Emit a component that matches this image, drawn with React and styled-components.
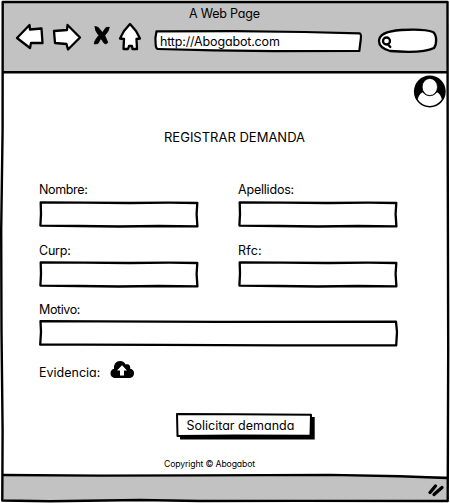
import React from 'react';
import styled, { createGlobalStyle } from 'styled-components';

const GlobalStyle = createGlobalStyle`
  * { box-sizing: border-box; }
  body { margin: 0; background: #fff; }
`;

const Browser = styled.div`
  position: relative;
  display: flex;
  flex-direction: column;
  width: 450px;
  height: 503px;
  padding: 2px 3px 2px 2px;
  color: #000;
  font-family: Inter, "Open Sans", sans-serif;
  font-feature-settings: "cv11" 1;
  font-size: 12.5px;
  line-height: 16px;
`;

const Outline = styled.svg`
  position: absolute;
  inset: 0;
  width: 100%;
  height: 100%;
  overflow: visible;
  fill: none;
  stroke: #000;
  stroke-width: ${(p) => p.$weight || 2.4};
  stroke-linejoin: round;
  pointer-events: none;
`;

const Text = styled.span`
  display: block;
  padding-top: 1px;
  margin-bottom: -1px;
  white-space: nowrap;
  font-size: ${(p) => p.$size || 12.5}px;
  letter-spacing: ${(p) => p.$track || 0}px;
`;

const Header = styled.header`
  height: 70px;
  flex: none;
  padding-top: 3px;
  background: #c2c2c2;
`;

const WindowTitle = styled.div`
  display: flex;
  padding-left: 187px;
  height: 16px;
`;

const Toolbar = styled.nav`
  display: flex;
  align-items: flex-start;
  height: 32px;
  padding-left: 13px;
`;

const ToolIcon = styled.svg`
  display: block;
  flex: none;
  width: ${(p) => p.$w}px;
  height: 32px;
  margin-right: ${(p) => p.$gap}px;
  overflow: visible;
  fill: #fff;
  stroke: #000;
  stroke-width: 2.3;
  stroke-linejoin: round;
  stroke-linecap: round;
`;

const AddressBar = styled.div`
  position: relative;
  flex: none;
  width: 208px;
  height: 22px;
  margin: 9px 15px 0 0;
  padding: 3px 0 0 6px;
`;

const Shape = styled(Outline)`
  fill: #fff;
`;

const Above = styled.div`
  position: relative;
`;

const Page = styled.main`
  display: flex;
  flex-direction: column;
  height: 404px;
  flex: none;
  background: #fff;
`;

const Account = styled.div`
  display: flex;
  justify-content: flex-end;
  height: 56px;
  padding: 3px 1px 0 0;
`;

const Heading = styled.h1`
  margin: 0 0 37px 162px;
  font-weight: 400;
  line-height: 16px;
`;

const Form = styled.form`
  display: grid;
  grid-template-columns: 160px 160px;
  column-gap: 39px;
  padding-left: 37px;
`;

const Field = styled.label`
  display: flex;
  flex-direction: column;
  gap: ${(p) => p.$gap}px;
  height: ${(p) => p.$h}px;
  grid-column: ${(p) => (p.$wide ? '1 / -1' : 'auto')};
`;

const InputBox = styled.div`
  position: relative;
  height: 27px;
`;

const Evidence = styled.div`
  display: flex;
  gap: 10px;
  height: 49px;
  grid-column: 1 / -1;
`;

const UploadIcon = styled.svg`
  display: block;
  width: 24px;
  height: 20px;
  margin-top: -4px;
`;

const Submit = styled.button`
  position: relative;
  display: flex;
  align-items: flex-start;
  flex: none;
  width: 139px;
  height: 27px;
  margin: 0 0 15px 174px;
  padding: 4px 0 0 10.5px;
  border: 0;
  background: none;
  color: inherit;
  font: inherit;
  font-feature-settings: inherit;
  text-align: left;
`;

const Copyright = styled.div`
  padding-left: 162px;
`;

const Footer = styled.footer`
  position: relative;
  flex: 1;
  display: flex;
  justify-content: flex-end;
  padding: 6px 2px 0 0;
  background: #c2c2c2;
`;

const Grip = styled.svg`
  position: relative;
  width: 18px;
  height: 15px;
  stroke: #000;
  stroke-width: 3.3;
  stroke-linecap: round;
`;

function SketchInput({ wide }) {
  return (
    <InputBox>
      {wide ? (
        <Outline viewBox="0 0 359 27" $weight={2.3}>
          <path d="M1.5 1.2 L60 1.4 L180 1.8 L357 1.7 L358 12 L357.2 25.4 L240 25.3 L120 24.9 L40 24.6 L1.2 24.7 L2 12 Z" />
        </Outline>
      ) : (
        <Outline viewBox="0 0 160 27" $weight={2.3}>
          <path d="M1.7 1.4 L45 1.6 L90 2 L130 1.7 L158.3 2 L157.6 13 L158.4 25.4 L120 25 L80 25.5 L40 25 L1.4 24.6 L2 13 Z" />
        </Outline>
      )}
    </InputBox>
  );
}

export default function App() {
  return (
    <>
      <GlobalStyle />
      <Browser>
        <Header>
          <WindowTitle><Text $track={-0.2}>A Web Page</Text></WindowTitle>
          <Toolbar>
            <ToolIcon $w={29} $gap={8} viewBox="15 21 29 32">
              <path d="M17 38 L29.5 25 L30 29.5 L41.5 28.5 L42.5 43 L31 43 L30 48 Z" />
            </ToolIcon>
            <ToolIcon $w={29} $gap={11} viewBox="52 21 29 32">
              <path d="M54 31 L67 30 L67.5 25 L80 37.5 L68 49.5 L66.5 44 L55 43 Z" />
            </ToolIcon>
            <ToolIcon $w={18} $gap={7} viewBox="92 21 18 32">
              <path d="M95 26.8 Q98 26 99.5 29 L102.5 32.5 L106 27.5 L109.3 27.3 Q109 31 104.8 35.5 L107.8 42.5 Q105 46 102.3 40.5 L100.8 38.5 L98 43.5 L94.3 44 Q94 41 98.8 35.5 Q94.5 30 95 26.8 Z" fill="#000" stroke="#000" strokeWidth="0.8" />
            </ToolIcon>
            <ToolIcon $w={23} $gap={14} viewBox="117 21 23 32">
              <path d="M130 24 L136 31 L140 38.5 L136.5 39 L137 49 L132.5 49 L132 46 L129 46 L128 49 L123.5 49 L124 39 L120 38.5 L124 31 Z" />
            </ToolIcon>
            <AddressBar>
              <Shape viewBox="0 0 208 22" $weight={2.2}>
                <path d="M2.5 1.4 L80 1.2 L150 2 L205.5 3.3 Q207.5 4 206.8 9 L205.3 21 L120 21.2 L60 20.3 L4 19 Q2 19 1.7 15 L1.4 8 Z" />
              </Shape>
              <Above><Text $track={-0.16}>http://Abogabot.com</Text></Above>
            </AddressBar>
            <ToolIcon $w={61} $gap={0} viewBox="377 21 61 32">
              <path d="M379 41 C379 34 387 31 401 30 C416 29 428 30 433 32 C437 35 437 44 434 48 C424 53 403 52 390 51 C383 49 379 45 379 41 Z" />
              <path d="M388 44.5 L390.3 47" />
              <circle cx="386.5" cy="41" r="3.5" />
            </ToolIcon>
          </Toolbar>
        </Header>
        <Page>
          <Account>
            <svg width="33" height="33" viewBox="0 0 33 33" role="img" aria-label="Usuario">
              <circle cx="16.8" cy="16.5" r="15.9" />
              <path d="M4.8 24.5 Q5.5 19.5 9.5 17.3 Q16.8 25 24.1 17.3 Q28 19.5 28.8 24.5 Q24 30.9 16.8 30.9 Q9 30.9 4.8 24.5 Z" fill="#fff" />
              <ellipse cx="16.8" cy="12" rx="7.7" ry="8.6" fill="#fff" stroke="#000" strokeWidth="0.8" />
            </svg>
          </Account>
          <Heading><Text $size={13}>REGISTRAR DEMANDA</Text></Heading>
          <Form>
            <Field $gap={4} $h={61}><Text $track={-0.35}>Nombre:</Text><SketchInput /></Field>
            <Field $gap={4} $h={61}><Text $track={-0.2}>Apellidos:</Text><SketchInput /></Field>
            <Field $gap={3} $h={59}><Text $track={-0.2}>Curp:</Text><SketchInput /></Field>
            <Field $gap={3} $h={59}><Text $track={0.2}>Rfc:</Text><SketchInput /></Field>
            <Field $gap={3} $h={63} $wide><Text $track={-0.4}>Motivo:</Text><SketchInput wide /></Field>
            <Evidence>
              <Text>Evidencia:</Text>
              <UploadIcon viewBox="0 0 24 20">
                <path d="M6 18 C2.5 18 0.5 16 0.5 13.2 C0.5 10.8 2 9.3 4 8.7 C3.7 4 6.2 1 10 1 C13 1 14.7 2.5 15.7 4.6 C18.3 3.3 20.8 5 20.2 8.7 C22.7 9 24 10.8 24 13.2 C24 16 22 18 19 18 Z" />
                <path d="M12 5.2 L17 10.6 H14 V15.5 H10 V10.6 H7 Z" fill="#fff" />
              </UploadIcon>
            </Evidence>
          </Form>
          <Submit type="button">
            <Outline viewBox="0 0 139 27">
              <path d="M4 4 H138.7 V26.5 H4 Z" fill="#000" stroke="none" />
              <path d="M1 1 L60 1.3 L135 1.8 L134.5 22.8 L60 22.5 L1.5 23 Z" fill="#fff" strokeWidth="2" />
            </Outline>
            <Above><Text>Solicitar demanda</Text></Above>
          </Submit>
          <Copyright><Text $size={8.7} $track={-0.14}>Copyright © Abogabot</Text></Copyright>
        </Page>
        <Footer>
          <Grip viewBox="0 0 18 15">
            <path d="M3 10.5 L8.5 4 M7 12.5 L15 5.5" />
          </Grip>
        </Footer>
        <Outline viewBox="0 0 450 503">
          <path d="M2.7 2 H447.5 L447.7 150 L448.2 350 L447.7 501 L300 500.9 L200 501 L140 500 L50 501.2 L2.3 500.5 L2.6 430 L1.5 330 L1.2 230 L2.6 130 Z" />
          <path d="M3 72.3 H447" />
          <path d="M3 475 L100 475.6 L200 475.4 L330 474.9 L400 476.2 L447 478" />
        </Outline>
      </Browser>
    </>
  );
}
